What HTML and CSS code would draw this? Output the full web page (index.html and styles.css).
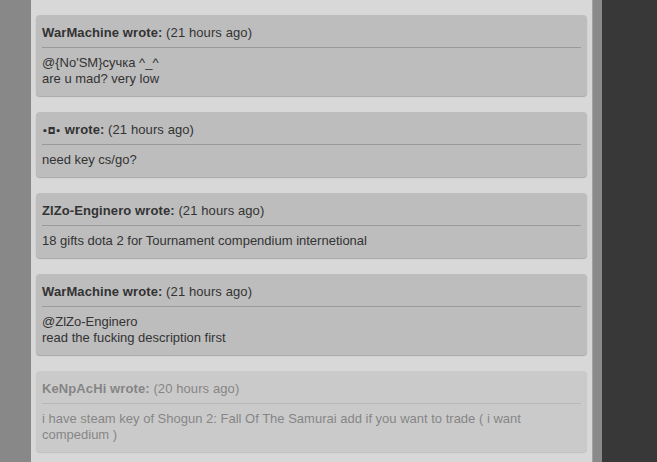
FILE: index.html
```html
<!DOCTYPE html>
<html>
<head>
<meta charset="utf-8">
<link rel="stylesheet" href="styles.css">
</head>
<body>
<div class="page">
  <div class="left-strip"></div>
  <main class="main">
    <div class="comment">
      <div class="head"><b>WarMachine wrote:</b> (21 hours ago)</div>
      <div class="body">@{No'SM}сучка ^_^<br>are u mad? very low</div>
    </div>
    <div class="comment">
      <div class="head"><b><span class="sym">•◘•</span> wrote:</b> (21 hours ago)</div>
      <div class="body">need key cs/go?</div>
    </div>
    <div class="comment">
      <div class="head"><b>ZlZo-Enginero wrote:</b> (21 hours ago)</div>
      <div class="body">18 gifts dota 2 for Tournament compendium internetional</div>
    </div>
    <div class="comment">
      <div class="head"><b>WarMachine wrote:</b> (21 hours ago)</div>
      <div class="body">@ZlZo-Enginero<br>read the fucking description first</div>
    </div>
    <div class="comment faded">
      <div class="head"><b>KeNpAcHi wrote:</b> (20 hours ago)</div>
      <div class="body">i have steam key of Shogun 2: Fall Of The Samurai add if you want to trade ( i want compedium )</div>
    </div>
  </main>
  <div class="scroll-strip"></div>
  <div class="dark"></div>
</div>
</body>
</html>
```
FILE: styles.css
```css
html, body {
  margin: 0;
  padding: 0;
  height: 100%;
  overflow: hidden;
}
body {
  font-family: "Liberation Sans", Arial, sans-serif;
  font-size: 13px;
  color: #333;
  background: #383838;
}
.page {
  display: flex;
  height: 462px;
}
.left-strip {
  width: 31px;
  background: #888888;
  flex: none;
}
.main {
  width: 551px;
  flex: none;
  background: #d8d8d8;
  padding: 15px 5px 0 5px;
  display: flex;
  flex-direction: column;
  gap: 16px;
}
.scroll-strip {
  width: 10px;
  flex: none;
  background: #8a8a8a;
  border-left: 1px solid #a2a2a2;
  box-sizing: border-box;
}
.dark {
  flex: 1;
  background: #383838;
}
.comment {
  flex: none;
  background: #bdbdbd;
  border-radius: 4px;
  padding: 9px 6px 9px;
  box-shadow: 0 1px 1px rgba(0, 0, 0, 0.22);
}
.head {
  height: 18px;
  line-height: 18px;
  padding-bottom: 5px;
  border-bottom: 1px solid #999;
  letter-spacing: 0.1px;
}
.head b {
  font-weight: bold;
}
.sym {
  font-family: "DejaVu Sans", sans-serif;
  font-size: 9px;
  font-weight: bold;
  letter-spacing: 0;
  line-height: 0;
}
.body {
  margin-top: 7px;
  line-height: 16px;
}
.faded {
  opacity: 0.5;
}
```
